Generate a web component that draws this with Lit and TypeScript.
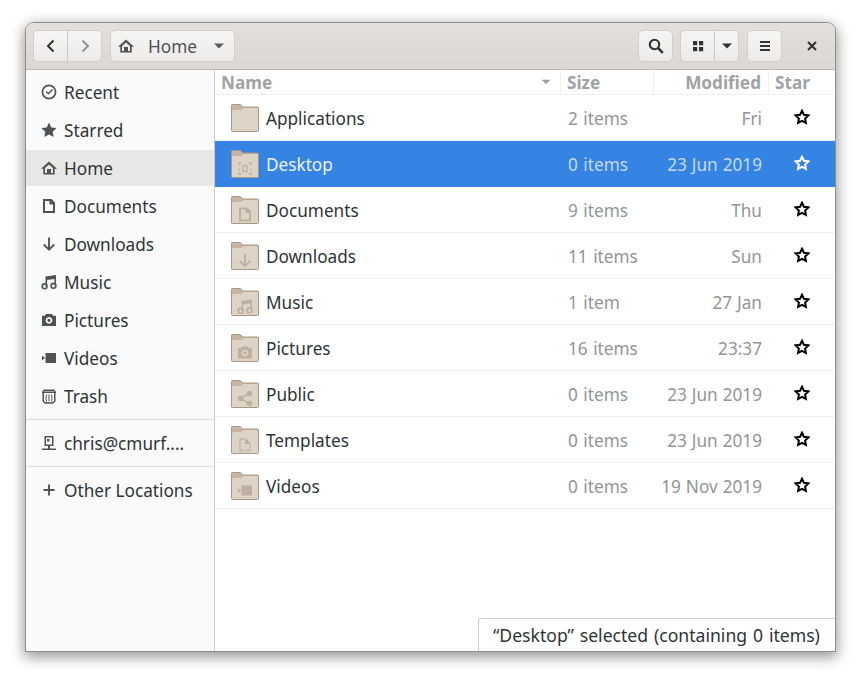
import { LitElement, html, css, svg } from 'lit';
import { customElement } from 'lit/decorators.js';

// symbolic icons, all on a 16x16 grid
const icons: Record<string, unknown> = {
  recent: svg`<circle cx="8" cy="8" r="6.600" fill="none" stroke="currentColor" stroke-width="1.700"/><path d="M5 7.500 7.500 9.500 11.500 5.500" fill="none" stroke="currentColor" stroke-width="1.500"/>`,
  star: svg`<path d="M8 .5l2.300 4.900 5.300.7-3.900 3.700 1 5.300L8 12.500l-4.700 2.600 1-5.300L.4 6.100l5.300-.7z" fill="currentColor"/>`,
  home: svg`<path d="M8 1.500 0 8.800h2.300V14.500h11.400V8.800H16z M4 8l4-3.600L12 8v5h-2V9H6v4H4z" fill="currentColor" fill-rule="evenodd"/>`,
  doc: svg`<path d="M2 1h8.500L14 4.500V15H2z M4 3v10h8V6.500H8.500V3z" fill="currentColor" fill-rule="evenodd"/>`,
  down: svg`<path d="M8 1.500v12M2.800 8.500 8 13.700l5.200-5.200" fill="none" stroke="currentColor" stroke-width="1.900"/>`,
  music: svg`<path d="M4.500 2.500 15 1v10.500h-1.600V5L6.100 6v6.500H4.500z" fill="currentColor"/><circle cx="3.600" cy="12.300" r="2.400" fill="none" stroke="currentColor" stroke-width="1.600"/><circle cx="12.500" cy="11.800" r="2.400" fill="none" stroke="currentColor" stroke-width="1.600"/>`,
  camera: svg`<path d="M5 2h6l1 1.800h3V14H1V3.800h3z M8 5a3.400 3.400 0 1 0 .01 0z M8 6.800a1.600 1.600 0 1 1-.01 0z" fill="currentColor" fill-rule="evenodd"/>`,
  video: svg`<path d="M4.500 3h10.500v10H4.500z M1 5.500 4 8l-3 2.500z" fill="currentColor"/>`,
  trash: svg`<path d="M3 1.500h10l2 2.200v1.300H1V3.700z M3 3l-.5.6h11L13 3z" fill="currentColor" fill-rule="evenodd"/><path d="M2.200 5v8l2 2h7.600l2-2V5" fill="none" stroke="currentColor" stroke-width="1.500"/><path d="M5.500 6.500c-.6 2.500-.6 4.500 0 7M8 6.500v7M10.500 6.500c.6 2.500.6 4.500 0 7" fill="none" stroke="currentColor" stroke-width="1"/>`,
  server: svg`<path d="M3.500 1h9v10h-9z M5 2.500v7h6v-7z" fill="currentColor" fill-rule="evenodd"/><path d="M6 4h2.500v2.500H6z M7 11h2v2.500H7z M1 13.500h14V15H1z" fill="currentColor"/>`,
  plus: svg`<path d="M8 2.500v11M2.500 8h11" stroke="currentColor" stroke-width="1.900" fill="none"/>`,
  back: svg`<path d="M10.500 2.500 5 8l5.500 5.500" fill="none" stroke="currentColor" stroke-width="2"/>`,
  forward: svg`<path d="M5.500 2.500 11 8l-5.500 5.500" fill="none" stroke="currentColor" stroke-width="2"/>`,
  search: svg`<circle cx="6.500" cy="6.500" r="4.700" fill="none" stroke="currentColor" stroke-width="2.100"/><path d="M10 10 14.800 14.800" stroke="currentColor" stroke-width="2.500"/>`,
  grid: svg`<path d="M3 3h4.200v4.200H3z M9 3h4.200v4.200H9z M3 9h4.200v4.200H3z M9 9h4.200v4.200H9z" fill="currentColor"/>`,
  menu: svg`<path d="M3 3h10v2H3z M3 7h10v2H3z M3 11h10v2H3z" fill="currentColor"/>`,
  close: svg`<path d="M4 4l8 8M12 4l-8 8" stroke="currentColor" stroke-width="2.100" fill="none"/>`,
  caret: svg`<path d="M3 5.500h10L8 10.500z" fill="currentColor"/>`,
  outlineStar: svg`<path d="M8 1.800l1.900 4 4.400.6-3.200 3.100.8 4.400L8 11.800l-3.900 2.100.8-4.400-3.200-3.100 4.400-.6z" fill="none" stroke="currentColor" stroke-width="2" stroke-linejoin="miter"/>`,
  desktopEmblem: svg`<path d="M2 4.500V2.500h2M2 8v2M2 11.500v2h2M12 2.500h2v2M14 8v2M12 13.500h2v-2" fill="none" stroke="currentColor" stroke-width="1.300"/><path d="M6 5h4v6H6z" fill="none" stroke="currentColor" stroke-width="1.300"/>`,
  templateEmblem: svg`<path d="M3 2.500h5.500l4.500 4.500v7H3z" fill="none" stroke="currentColor" stroke-width="1.800" stroke-dasharray="1.500 1"/><path d="M8 2v5.500h5.500z" fill="currentColor"/>`,
  shareEmblem: svg`<circle cx="3.500" cy="8" r="2.800" fill="currentColor"/><circle cx="12.500" cy="3" r="2.800" fill="currentColor"/><circle cx="12.500" cy="13" r="2.800" fill="currentColor"/><path d="M3.500 8 12.500 3M3.500 8l9 5" stroke="currentColor" stroke-width="1.600"/>`,
};

const icon = (name: string, cls = '') =>
  html`<svg class="icon ${cls}" viewBox="0 0 16 16" width="16" height="16">${icons[name]}</svg>`;

// the emblem reuses a symbolic icon, painted on the lower half of the folder
const folder = (emblem: string) => html`<svg class="folder" viewBox="0 0 28 28" width="28" height="28">
  <path d="M.5 26.500V1.500a1 1 0 0 1 1-1h7.800L11.800 3h14.700a1 1 0 0 1 1 1v22.500a1 1 0 0 1-1 1h-25a1 1 0 0 1-1-1z" fill="#c6b5a3" stroke="#a89784"/>
  <path d="M1 26.500V7a1 1 0 0 1 1-1h8.500l2-2H26a1 1 0 0 1 1 1v21.500a.5.5 0 0 1-.5.5H1.500a.5.5 0 0 1-.5-.5z" fill="#ded3c7"/>
  ${emblem ? svg`<g transform="translate(6 10.500)" color="#bfb09f"><svg width="16" height="16" viewBox="0 0 16 16">${icons[emblem]}</svg></g>` : ''}
</svg>`;

const places = [
  ['recent', 'Recent'],
  ['star', 'Starred'],
  ['home', 'Home'],
  ['doc', 'Documents'],
  ['down', 'Downloads'],
  ['music', 'Music'],
  ['camera', 'Pictures'],
  ['video', 'Videos'],
  ['trash', 'Trash'],
];

const files = [
  ['', 'Applications', '2 items', 'Fri'],
  ['desktopEmblem', 'Desktop', '0 items', '23 Jun 2019'],
  ['doc', 'Documents', '9 items', 'Thu'],
  ['down', 'Downloads', '11 items', 'Sun'],
  ['music', 'Music', '1 item', '27 Jan'],
  ['camera', 'Pictures', '16 items', '23:37'],
  ['shareEmblem', 'Public', '0 items', '23 Jun 2019'],
  ['templateEmblem', 'Templates', '0 items', '23 Jun 2019'],
  ['video', 'Videos', '0 items', '19 Nov 2019'],
];

@customElement('app-root')
export class AppRoot extends LitElement {
  static styles = css`
    :host {
      display: block;
      width: 861px;
      height: 680px;
      box-sizing: border-box;
      padding: 23px 26px 29px 26px;
      background: #fff;
      font-family: 'Noto Sans', sans-serif;
      font-size: 17.2px;
      color: #2e3436;
    }
    .icon { flex: none; }
    .folder { flex: none; }
    .window {
      position: relative;
      height: 628px;
      width: 809px;
      display: flex;
      flex-direction: column;
      border-radius: 8px 8px 0 0;
      overflow: hidden;
      background: #fff;
      box-shadow: 0 0 0 1px #8e8e8e, 0 4px 14px 2px rgba(0, 0, 0, 0.42);
    }
    .header {
      flex: none;
      box-sizing: border-box;
      height: 47px;
      padding: 7px 7px 0 7px;
      display: flex;
      background: linear-gradient(#e3e0dc, #dbd8d3);
      border-bottom: 1px solid #bfb8b1;
    }
    .btn {
      box-sizing: border-box;
      height: 32px;
      display: flex;
      align-items: center;
      justify-content: center;
      background: linear-gradient(#f6f5f4, #edebe9);
      border: 1px solid #d3cec9;
      border-radius: 5px;
      color: #2e3436;
    }
    .group { display: flex; }
    .group .btn:first-child { border-radius: 5px 0 0 5px; border-right-color: #cdc7c2; }
    .group .btn:last-child { border-radius: 0 5px 5px 0; border-left: none; }
    .nav { width: 35px; }
    .nav.off { width: 34px; color: #8f9395; }
    .path {
      width: 125px;
      margin-left: 8px;
      justify-content: flex-start;
      padding-left: 7px;
      gap: 14px;
      color: #4a5257;
    }
    .path .icon:last-child { margin-left: 0; color: #565b5e; }
    .spacer { flex: 1; }
    .square { width: 35px; }
    .view { margin: 0 8px 0 7px; }
    .view .btn:first-child { width: 35px; }
    .view .btn:last-child { width: 24px; }
    .close {
      width: 46px;
      display: flex;
      align-items: center;
      justify-content: flex-end;
      padding-right: 8px;
      box-sizing: border-box;
      color: #2e3436;
      height: 32px;
    }
    .body { flex: 1; display: flex; min-height: 0; }
    .side {
      flex: none;
      width: 189px;
      box-sizing: border-box;
      padding-top: 4px;
      background: #fafafa;
      border-right: 1px solid #cfcac5;
      display: flex;
      flex-direction: column;
      gap: 2px;
    }
    .place {
      height: 36px;
      display: flex;
      align-items: center;
      padding-left: 15px;
      gap: 7px;
      white-space: nowrap;
    }
    .place .icon { color: #4f5355; }
    .place.active { background: #e8e8e7; }
    hr {
      border: none;
      height: 1px;
      background: #dcdcdc;
      margin: 3px 0 3px;
    }
    .main { flex: 1; min-width: 0; background: #fff; }
    .cols {
      display: grid;
      grid-template-columns: 346px 93px 115px 1fr;
    }
    .head {
      height: 25px;
      box-sizing: border-box;
      border-bottom: 1px solid #f0f0ef;
      font-weight: 700;
      color: #a0a2a3;
      font-size: 17.2px;
    }
    .head > div {
      display: flex;
      align-items: center;
      padding: 0 6px;
      border-right: 1px solid #f0f0ef;
      min-width: 0;
    }
    .head > div:last-child { border-right: none; }
    .head .name { justify-content: space-between; padding-right: 7px; }
    .head .icon { color: #9d9fa0; width: 14px; height: 14px; }
    .head .mod { justify-content: flex-end; padding-right: 7px; }
    .row {
      height: 46px;
      box-sizing: border-box;
      border-bottom: 1px solid #f0f0ef;
      align-items: center;
      color: #2e3436;
    }
    .row .name { display: flex; align-items: center; gap: 7px; padding-left: 16px; }
    .row .name span { padding-top: 1px; }
    .row .size { padding: 1px 0 0 7px; color: #929596; word-spacing: 1px; }
    .row .mod { text-align: right; padding: 1px 7px 0 0; color: #929596; word-spacing: 0.5px; }
    .row .star { display: flex; justify-content: center; padding: 0 1px 2px 0; color: #000; }
    .row.selected { background: #3584e4; color: #fff; border-bottom-color: #3584e4; }
    .row.selected .size, .row.selected .mod { color: #c4daf6; }
    .row.selected .name span { color: #eaf2fc; }
    .row.selected .star { color: #fff; }
    .status {
      position: absolute;
      right: 0;
      bottom: 0;
      width: 357px;
      height: 33px;
      box-sizing: border-box;
      padding-left: 14px;
      display: flex;
      align-items: center;
      background: #fff;
      border: 1px solid #cfcac5;
      border-width: 1px 0 0 1px;
      border-top-left-radius: 3px;
      white-space: nowrap;
      font-size: 17.6px;
      word-spacing: 1.3px;
    }
  `;

  render() {
    return html`
      <div class="window">
        <div class="header">
          <div class="group">
            <div class="btn nav">${icon('back')}</div>
            <div class="btn nav off">${icon('forward')}</div>
          </div>
          <div class="btn path">${icon('home')}<span>Home</span>${icon('caret')}</div>
          <div class="spacer"></div>
          <div class="btn square">${icon('search')}</div>
          <div class="group view">
            <div class="btn">${icon('grid')}</div>
            <div class="btn">${icon('caret')}</div>
          </div>
          <div class="btn square">${icon('menu')}</div>
          <div class="close">${icon('close')}</div>
        </div>
        <div class="body">
          <div class="side">
            ${places.map(
              ([ic, label]) => html`<div class="place ${label === 'Home' ? 'active' : ''}">${icon(ic)}<span>${label}</span></div>`
            )}
            <hr />
            <div class="place">${icon('server')}<span>chris@cmurf....</span></div>
            <hr />
            <div class="place">${icon('plus')}<span>Other Locations</span></div>
          </div>
          <div class="main">
            <div class="cols head">
              <div class="name"><span>Name</span>${icon('caret')}</div>
              <div>Size</div>
              <div class="mod">Modified</div>
              <div>Star</div>
            </div>
            ${files.map(
              ([emblem, name, size, mod]) => html`
                <div class="cols row ${name === 'Desktop' ? 'selected' : ''}">
                  <div class="name">${folder(emblem)}<span>${name}</span></div>
                  <div class="size">${size}</div>
                  <div class="mod">${mod}</div>
                  <div class="star">${icon('outlineStar')}</div>
                </div>
              `
            )}
          </div>
        </div>
        <div class="status">“Desktop” selected (containing 0 items)</div>
      </div>
    `;
  }
}

declare global {
  interface HTMLElementTagNameMap {
    'app-root': AppRoot;
  }
}
